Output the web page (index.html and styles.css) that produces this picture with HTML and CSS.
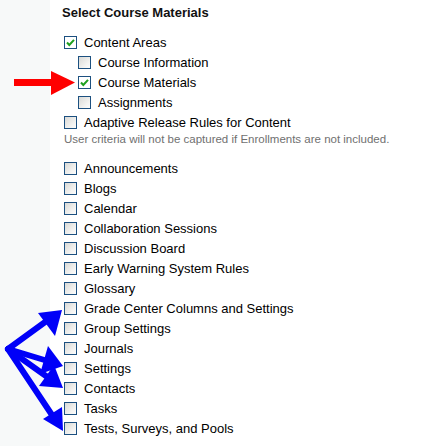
FILE: index.html
```html
<!DOCTYPE html>
<html>
<head>
<meta charset="utf-8">
<link rel="stylesheet" href="styles.css">
</head>
<body>
<div class="page">
  <div class="strip"></div>
  <div class="main">
    <div class="title">Select Course Materials</div>
    <ul class="group">
      <li class="row"><span class="cb checked"><svg viewBox="0 0 11 11"><path d="M2 5.5 L4.3 8 L9 2.8" fill="none" stroke="#1fa01f" stroke-width="2"/></svg></span>Content Areas</li>
      <li class="row sub"><span class="cb"></span>Course Information</li>
      <li class="row sub"><span class="cb checked"><svg viewBox="0 0 11 11"><path d="M2 5.5 L4.3 8 L9 2.8" fill="none" stroke="#1fa01f" stroke-width="2"/></svg></span>Course Materials</li>
      <li class="row sub"><span class="cb"></span>Assignments</li>
      <li class="row"><span class="cb"></span>Adaptive Release Rules for Content</li>
    </ul>
    <div class="note">User criteria will not be captured if Enrollments are not included.</div>
    <ul class="group list2">
      <li class="row"><span class="cb"></span>Announcements</li>
      <li class="row"><span class="cb"></span>Blogs</li>
      <li class="row"><span class="cb"></span>Calendar</li>
      <li class="row"><span class="cb"></span>Collaboration Sessions</li>
      <li class="row"><span class="cb"></span>Discussion Board</li>
      <li class="row"><span class="cb"></span>Early Warning System Rules</li>
      <li class="row"><span class="cb"></span>Glossary</li>
      <li class="row"><span class="cb"></span>Grade Center Columns and Settings</li>
      <li class="row"><span class="cb"></span>Group Settings</li>
      <li class="row"><span class="cb"></span>Journals</li>
      <li class="row"><span class="cb"></span>Settings</li>
      <li class="row"><span class="cb"></span>Contacts</li>
      <li class="row"><span class="cb"></span>Tasks</li>
      <li class="row"><span class="cb"></span>Tests, Surveys, and Pools</li>
    </ul>
  </div>
</div>
<svg class="annot" width="433" height="446" viewBox="0 0 433 446">
  <g fill="#f00">
    <rect x="14" y="79" width="39" height="7"/>
    <polygon points="51,71 75,82.5 51,95"/>
  </g>
  <g stroke="#0000f8" stroke-width="6" stroke-linecap="round" fill="none">
    <line x1="8" y1="349" x2="52" y2="317"/>
    <line x1="8" y1="349" x2="51" y2="362"/>
    <line x1="8" y1="349" x2="53" y2="381"/>
    <line x1="8" y1="349" x2="56" y2="421"/>
  </g>
  <g fill="#0000f8">
    <polygon points="62,310 38,313 55,336"/>
    <polygon points="63,366 48,346 40,374"/>
    <polygon points="63,388 54,365 39,386"/>
    <polygon points="63,431 62,407 43,419"/>
  </g>
</svg>
</body>
</html>
```
FILE: styles.css
```css
html, body {
  margin: 0;
  padding: 0;
  background: #fff;
}
body {
  position: relative;
  width: 433px;
  height: 446px;
  overflow: hidden;
  font-family: "Liberation Sans", Arial, sans-serif;
}
.page {
  display: flex;
  height: 446px;
}
.strip {
  width: 50px;
  flex: none;
  background: #f7f9f9;
}
.main {
  padding-left: 12px;
  padding-top: 3px;
}
.title {
  font-weight: bold;
  font-size: 13px;
  line-height: 20px;
  color: #111;
}
.group {
  list-style: none;
  margin: 9px 0 0 0;
  padding: 0 0 0 2px;
}
.row {
  display: flex;
  align-items: center;
  height: 20px;
  font-size: 13px;
  color: #000;
}
.row.sub {
  padding-left: 14px;
}
.cb {
  box-sizing: border-box;
  width: 13px;
  height: 13px;
  border: 1px solid #1c5080;
  background: linear-gradient(135deg, #d9d9d6 0%, #f4f4f2 70%, #fcfcfb 100%);
  margin-right: 7px;
  flex: none;
  display: flex;
}
.cb.checked {
  background: #fff;
}
.cb svg {
  width: 11px;
  height: 11px;
}
.note {
  font-size: 11.5px;
  line-height: 14px;
  color: #707070;
  padding-left: 2px;
}
.list2 {
  margin-top: 12px;
}
.annot {
  position: absolute;
  left: 0;
  top: 0;
  pointer-events: none;
}
```
